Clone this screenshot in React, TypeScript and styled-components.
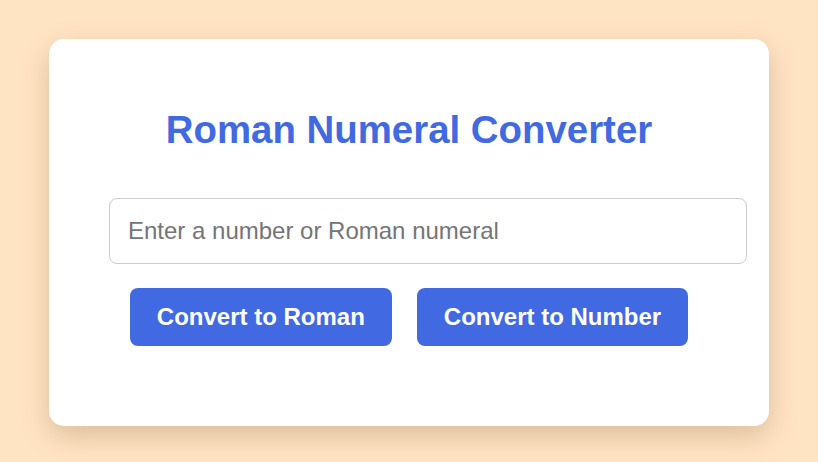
import React, { useState } from 'react';
import styled, { createGlobalStyle } from 'styled-components';

const GlobalStyle = createGlobalStyle`
  html, body {
    margin: 0;
    padding: 0;
  }
  body {
    background: #ffe4c4;
    font-family: 'Liberation Sans', Arial, sans-serif;
  }
`;

const Page = styled.main`
  min-height: 100vh;
  display: flex;
  align-items: center;
  justify-content: center;
`;

const Card = styled.section`
  width: 600px;
  margin-top: 3px;
  padding: 69px 60px 80px;
  background: #ffffff;
  border-radius: 15px;
  box-shadow: 0 10px 28px rgba(140, 100, 60, 0.3);
`;

const Title = styled.h1`
  margin: 0 0 46px;
  text-align: center;
  font-size: 38.4px;
  font-weight: 700;
  color: #4169e1;
`;

const Field = styled.input`
  display: block;
  width: 100%;
  margin: 0;
  padding: 18px;
  border: 1px solid #cccccc;
  border-radius: 8px;
  font-family: 'Liberation Sans', Arial, sans-serif;
  font-size: 24px;
  color: #333;
  outline: none;

  &::placeholder {
    color: #757575;
  }
`;

const Actions = styled.div`
  display: flex;
  justify-content: center;
  gap: 25px;
  margin-top: 24px;
`;

const Button = styled.button`
  padding: 15px 27px;
  border: none;
  border-radius: 8px;
  background: #4169e1;
  color: #ffffff;
  font-family: 'Liberation Sans', Arial, sans-serif;
  font-size: 24px;
  font-weight: 700;
  cursor: pointer;
`;

const toRoman = (n: number) => {
  const map: [number, string][] = [
    [1000, 'M'], [900, 'CM'], [500, 'D'], [400, 'CD'], [100, 'C'], [90, 'XC'],
    [50, 'L'], [40, 'XL'], [10, 'X'], [9, 'IX'], [5, 'V'], [4, 'IV'], [1, 'I'],
  ];
  let out = '';
  for (const [v, s] of map) {
    while (n >= v) {
      out += s;
      n -= v;
    }
  }
  return out;
};

const fromRoman = (s: string) => {
  const vals: Record<string, number> = { I: 1, V: 5, X: 10, L: 50, C: 100, D: 500, M: 1000 };
  let total = 0;
  const up = s.toUpperCase();
  for (let i = 0; i < up.length; i++) {
    const cur = vals[up[i]] || 0;
    const next = vals[up[i + 1]] || 0;
    total += cur < next ? -cur : cur;
  }
  return total;
};

export default function App() {
  const [value, setValue] = useState('');

  return (
    <Page>
      <GlobalStyle />
      <Card>
        <Title>Roman Numeral Converter</Title>
        <Field
          value={value}
          onChange={(e) => setValue(e.target.value)}
          placeholder="Enter a number or Roman numeral"
        />
        <Actions>
          <Button onClick={() => setValue(toRoman(parseInt(value, 10) || 0))}>Convert to Roman</Button>
          <Button onClick={() => setValue(String(fromRoman(value)))}>Convert to Number</Button>
        </Actions>
      </Card>
    </Page>
  );
}
